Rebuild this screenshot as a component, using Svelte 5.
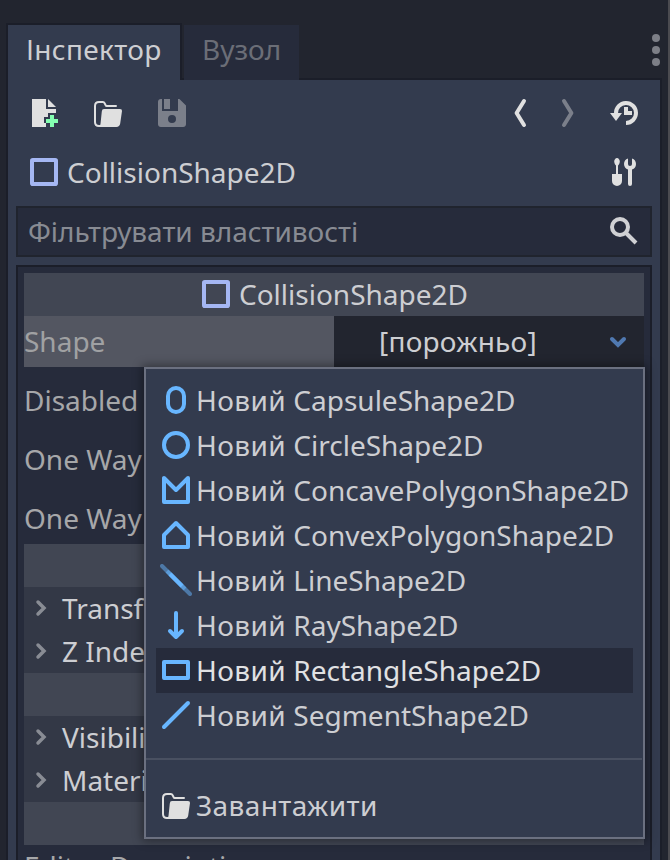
<script>
  const shapes = ['Capsule', 'Circle', 'ConcavePolygon', 'ConvexPolygon', 'Line', 'Ray', 'Rectangle', 'Segment'];
  const selected = 'Rectangle';
  const properties = ['Disabled', 'One Way', 'One Way'];
  const groups = [['Transform', 'Z Index'], ['Visibility', 'Material'], []];
</script>

{#snippet square()}
  <svg class="icon" viewBox="0 0 16 16"><rect x="2" y="2" width="12" height="12" rx=".4" fill="none" stroke="#a5b7f3" stroke-width="2" stroke-linejoin="round" /></svg>
{/snippet}

{#snippet folder()}
  <svg class="icon" viewBox="0 0 16 16" fill="#e0e0e0">
    <path d="M12 4.5H7.2C6.5 4.5 6.7 2.5 5.5 2.5h-2c-1.2 0-2 .7-2 2v8c0 1.3.8 2 2 2H4" fill="none" stroke="#e0e0e0" stroke-linecap="round" />
    <path d="M6 6h8q1.1 0 1 1l-.9 6.3Q13.8 15 12.2 15H2.9c1-.3 1.3-1 1.4-2l.6-5.8Q5 6 6 6z" />
  </svg>
{/snippet}

<div class="editor">
  <div class="tabbar">
    <div class="tab active">Інспектор</div>
    <div class="tab idle">Вузол</div>
    <svg class="dots" width="8" height="32" viewBox="0 0 8 32" fill="#7d7f87"><circle cx="4" cy="4" r="4" /><circle cx="4" cy="16" r="4" /><circle cx="4" cy="28" r="4" /></svg>
  </div>

  <div class="dock">
    <div class="toolbar">
      <svg class="icon" viewBox="0 0 16 16" fill="#e0e0e0"><path d="M2 1v14h7v-2H8v-3h2V8h4V6H9V1zM10 1v4h4z" /><path fill="#84ffb1" d="M11 9h2v2h2v2h-2v2h-2v-2H9v-2h2z" /></svg>
      {@render folder()}
      <svg class="icon" viewBox="0 0 16 16"><path fill="#7b7f8a" fill-rule="evenodd" d="M2.4 1C1.6 1 1 1.600 1 2.400v11.200c0 .8.6 1.400 1.400 1.400h11.200c.8 0 1.400-.6 1.400-1.400V4.300L11.700 1H11v6H3V1zM4 1v5h3V1zM8 9a2 2 0 1 1 0 4 2 2 0 0 1 0-4z" /></svg>
      <div class="history">
        <svg class="arrow" viewBox="0 0 8 16"><path d="M6 2 2.300 8 6 14" stroke="#e0e0e0" /></svg>
        <svg class="arrow next" viewBox="0 0 8 16"><path d="M2 2 5.700 8 2 14" stroke="#7b7f8a" /></svg>
        <svg class="icon" viewBox="0 0 16 16" fill="#e0e0e0"><path d="M4 8.200a5 5 0 1 1 5 4.800" fill="none" stroke="#e0e0e0" stroke-width="2" /><path d="M1 8h6l-3 4zM8 5h2v2h2v2H8z" /></svg>
      </div>
    </div>

    <div class="object">
      {@render square()}
      <span>CollisionShape2D</span>
      <svg class="icon tools" viewBox="0 0 16 16" fill="#e0e0e0"><path d="M4.500 1C3.700 1 3.100 2 3.100 2.700S3.500 4.300 4 4.700V9H2v3.500a2.500 2.500 0 0 0 5 0V9H5V4.700c.5-.4.9-1.300.9-2S5.300 1 4.500 1zM10 1.200A3 3 0 0 0 8 4c0 1.300.8 2.400 2 2.800V14a1 1 0 0 0 2 0V6.800A3 3 0 0 0 14 4a3 3 0 0 0-2-2.800V4a1 1 0 0 1-2 0z" /></svg>
    </div>

    <div class="filter">
      <span>Фільтрувати властивості</span>
      <svg class="icon" viewBox="0 0 16 16" fill="none" stroke="#d0d1d4" stroke-width="2"><circle cx="6" cy="6" r="4" /><path d="m9 9 5 5" /></svg>
    </div>

    <div class="inspector">
      <div class="category">{@render square()}<span>CollisionShape2D</span></div>
      <div class="shape-row">
        <div class="label">Shape</div>
        <div class="value">
          <span>[порожньо]</span>
          <svg width="20" height="16" viewBox="0 0 20 16"><path d="m4 5 6 6 6-6" fill="none" stroke="#5079b1" stroke-width="4" stroke-linecap="round" /></svg>
        </div>
      </div>
      {#each properties as property}
        <div class="property">{property}</div>
      {/each}
      {#each groups as sections}
        <div class="category"></div>
        {#each sections as section}
          <div class="section">
            <svg width="14" height="20" viewBox="0 0 14 20"><path d="m4 4 6 6-6 6" fill="none" stroke="#898c94" stroke-width="3.500" stroke-linecap="round" /></svg>
            <span>{section}</span>
          </div>
        {/each}
      {/each}
      <div class="description">Editor Description</div>
    </div>
  </div>

  <div class="menu">
    {#each shapes as shape}
      <div class="item" class:selected={shape === selected}>
        <svg class="icon" viewBox="0 0 16 16" fill="none" stroke="#68b6ff" stroke-width="2" stroke-linecap="round" stroke-linejoin="round">
          {#if shape === 'Capsule'}
            <rect x="4" y="2" width="8" height="12" rx="4" />
          {:else if shape === 'Circle'}
            <circle cx="8" cy="8" r="6" />
          {:else if shape === 'ConcavePolygon'}
            <path d="M2 2v12h12V2L8 8z" />
          {:else if shape === 'ConvexPolygon'}
            <path d="M2 8v6h12V8L8 2z" />
          {:else if shape === 'Line'}
            <path d="m1 1 14 14" opacity=".5" /><path d="m3.500 3.500 9 9" opacity=".55" stroke-linecap="butt" /><path d="m5 5 6 6" stroke-linecap="butt" />
          {:else if shape === 'Ray'}
            <path d="M8 2v12M5 11l3 3 3-3" />
          {:else if shape === 'Rectangle'}
            <rect x="2" y="4" width="12" height="8" />
          {:else}
            <path d="M2 14 14 2" />
          {/if}
        </svg>
        <span><span class="wide">Новий</span> {shape}Shape2D</span>
      </div>
    {/each}
    <div class="separator"></div>
    <div class="item">{@render folder()}<span class="wide">Завантажити</span></div>
  </div>
</div>

<style>
  :global(body) { background: #22252f; }
  .editor {
    position: relative;
    box-sizing: border-box;
    width: 670px;
    height: 860px;
    padding: 23px 6px 0;
    overflow: hidden;
    background: #22252f;
    border-right: 2px solid #4b4b50;
    color: #cdced2;
    font: 28px/38px "Noto Sans", sans-serif;
    white-space: nowrap;
  }
  svg { display: block; flex: none; }
  .icon { width: 32px; height: 32px; }
  .wide { letter-spacing: .4px; }
  .tabbar { display: flex; height: 55px; }
  .tab { box-sizing: border-box; z-index: 1; }
  .active { width: 176px; height: 57px; padding: 5px 18px 0; background: #333b4e; border: 2px solid #1b1e29; border-bottom: 0; letter-spacing: .33px; }
  .idle { width: 115px; height: 55px; margin: 2px 0 0 2px; padding: 5px 0 0 18px; background: #262b3b; color: #6b6e77; }
  .dots { margin: 11px 2px 0 auto; }
  .dock {
    box-sizing: border-box;
    width: 656px;
    height: 790px;
    padding: 0 8px;
    background: #333b4e;
    border: 2px solid #1b1e29;
  }
  .toolbar { display: flex; align-items: center; gap: 32px; height: 66px; padding-left: 12px; }
  .history { display: flex; margin: 0 12px 0 auto; }
  .arrow { width: 16px; height: 32px; fill: none; stroke-width: 2; stroke-linecap: round; stroke-linejoin: round; }
  .next { margin: 0 32px; }
  .object { display: flex; align-items: center; height: 52px; padding: 0 12px; }
  .object span { margin-left: 7px; }
  .tools { margin-left: auto; }
  .filter {
    box-sizing: border-box;
    display: flex;
    align-items: center;
    justify-content: space-between;
    height: 51px;
    margin-top: 8px;
    padding: 0 10px 1px;
    background: #262b3b;
    border: 2px solid #20242e;
    color: #888b93;
    letter-spacing: -.03px;
  }
  .inspector {
    height: 610px;
    margin-top: 8px;
    padding: 6px 6px 0;
    background: #262b3b;
    border: 2px solid #1b1e29;
  }
  .category { box-sizing: border-box; display: flex; align-items: center; justify-content: center; gap: 7px; height: 43px; padding-bottom: 1px; background: #414653; }
  .shape-row { display: flex; height: 51px; line-height: 51px; }
  .label { width: 310px; background: #535661; color: #a0a1a3; }
  .value { box-sizing: border-box; display: flex; align-items: center; justify-content: space-between; width: 310px; padding: 0 16px 0 45px; background: #22252f; }
  .value span { letter-spacing: .25px; }
  .property { height: 51px; margin-top: 8px; line-height: 51px; color: #a6a7a9; }
  .section { box-sizing: border-box; display: flex; align-items: center; height: 43px; padding: 0 0 1px 10px; background: #333846; }
  .section span { margin-left: 14px; }
  .description { height: 43px; line-height: 43px; color: #a6a7a9; }
  .menu {
    position: absolute;
    z-index: 2;
    left: 144px;
    top: 367px;
    box-sizing: border-box;
    width: 501px;
    height: 472px;
    padding-top: 9px;
    background: #333b4e;
    border: 2px solid #6b7080;
    box-shadow: 0 0 9px 2px rgba(0, 0, 0, .38);
  }
  .item { box-sizing: border-box; display: flex; align-items: center; gap: 4px; width: 477px; height: 45px; margin-left: 10px; padding: 0 0 1px 4px; }
  .selected { background: #262b3b; color: #e0e1e3; }
  .separator { height: 2px; margin: 20px 1px 23px 0; background: #495061; }
</style>
